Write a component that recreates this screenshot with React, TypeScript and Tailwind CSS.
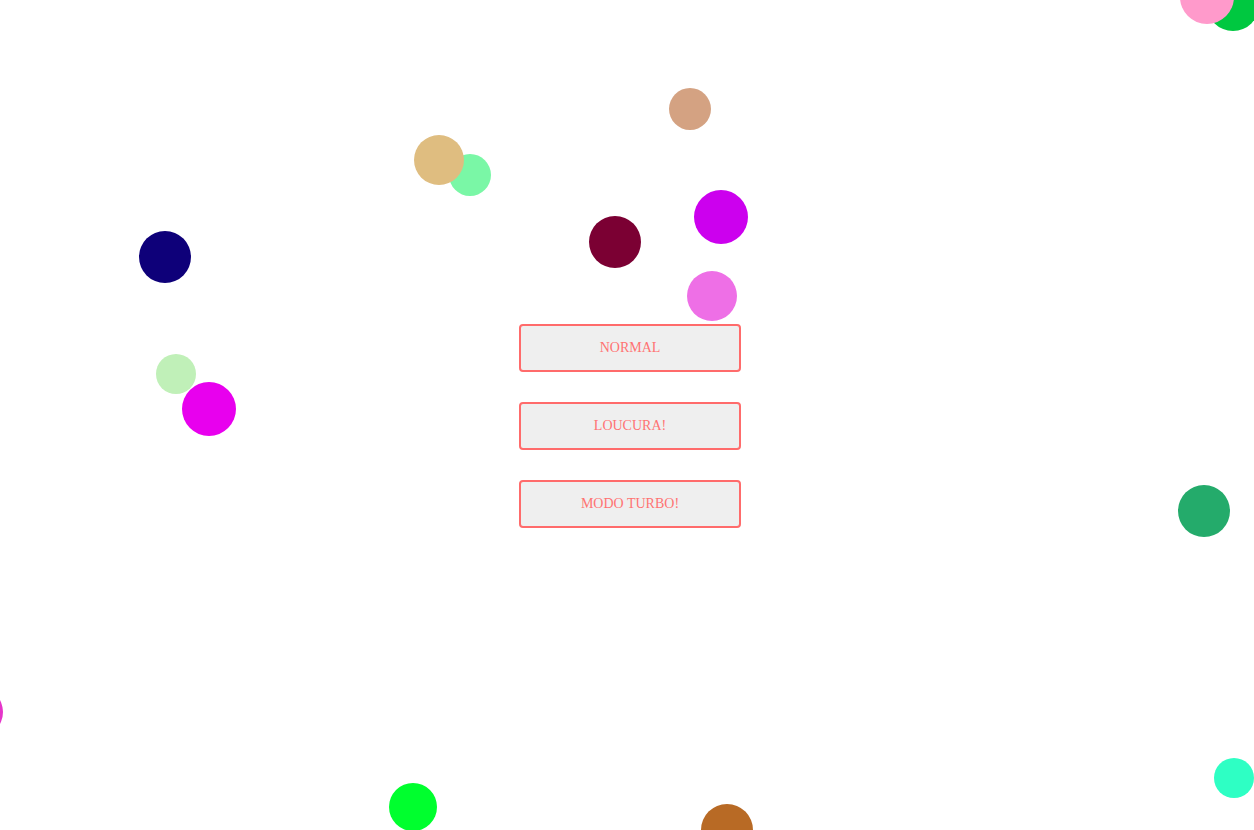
import React from 'react';

// bolinhas espalhadas pela tela: [x centro, y centro, diâmetro, cor]
const BOLAS: [number, number, number, string][] = [
  [1233, 5, 52, '#00c840'],
  [1207, -3, 54, '#ff9acb'],
  [690, 109, 42, '#d4a282'],
  [470, 175, 42, '#7af7a6'],
  [439, 160, 50, '#dfbd80'],
  [721, 217, 54, '#cc00ee'],
  [615, 242, 52, '#7b0033'],
  [165, 257, 52, '#0e0079'],
  [712, 296, 50, '#ee6fe6'],
  [176, 374, 40, '#c0f0b8'],
  [209, 409, 54, '#e800ee'],
  [1204, 511, 52, '#24ab6b'],
  [-22, 712, 50, '#e535c9'],
  [1234, 778, 40, '#2effc4'],
  [413, 807, 48, '#00ff2e'],
  [727, 830, 52, '#b86a25'],
];

const MODOS = ['NORMAL', 'LOUCURA!', 'MODO TURBO!'];

export default function App() {
  return (
    <div className="relative w-full h-[830px] bg-white overflow-hidden">
      {BOLAS.map(([x, y, d, cor], i) => (
        <div
          key={i}
          className="absolute rounded-full"
          style={{ left: x - d / 2, top: y - d / 2, width: d, height: d, background: cor }}
        />
      ))}

      <div className="relative flex flex-col gap-[30px] pt-[324px] ml-[519px] w-[222px]">
        {MODOS.map((m) => (
          <button
            key={m}
            className="h-[48px] w-full pb-[2px] rounded-[4px] border-2 border-[#ff6b6b] bg-[#efefef] text-[14px] text-[#ff7373] font-['Liberation_Serif',serif]"
          >
            {m}
          </button>
        ))}
      </div>
    </div>
  );
}
